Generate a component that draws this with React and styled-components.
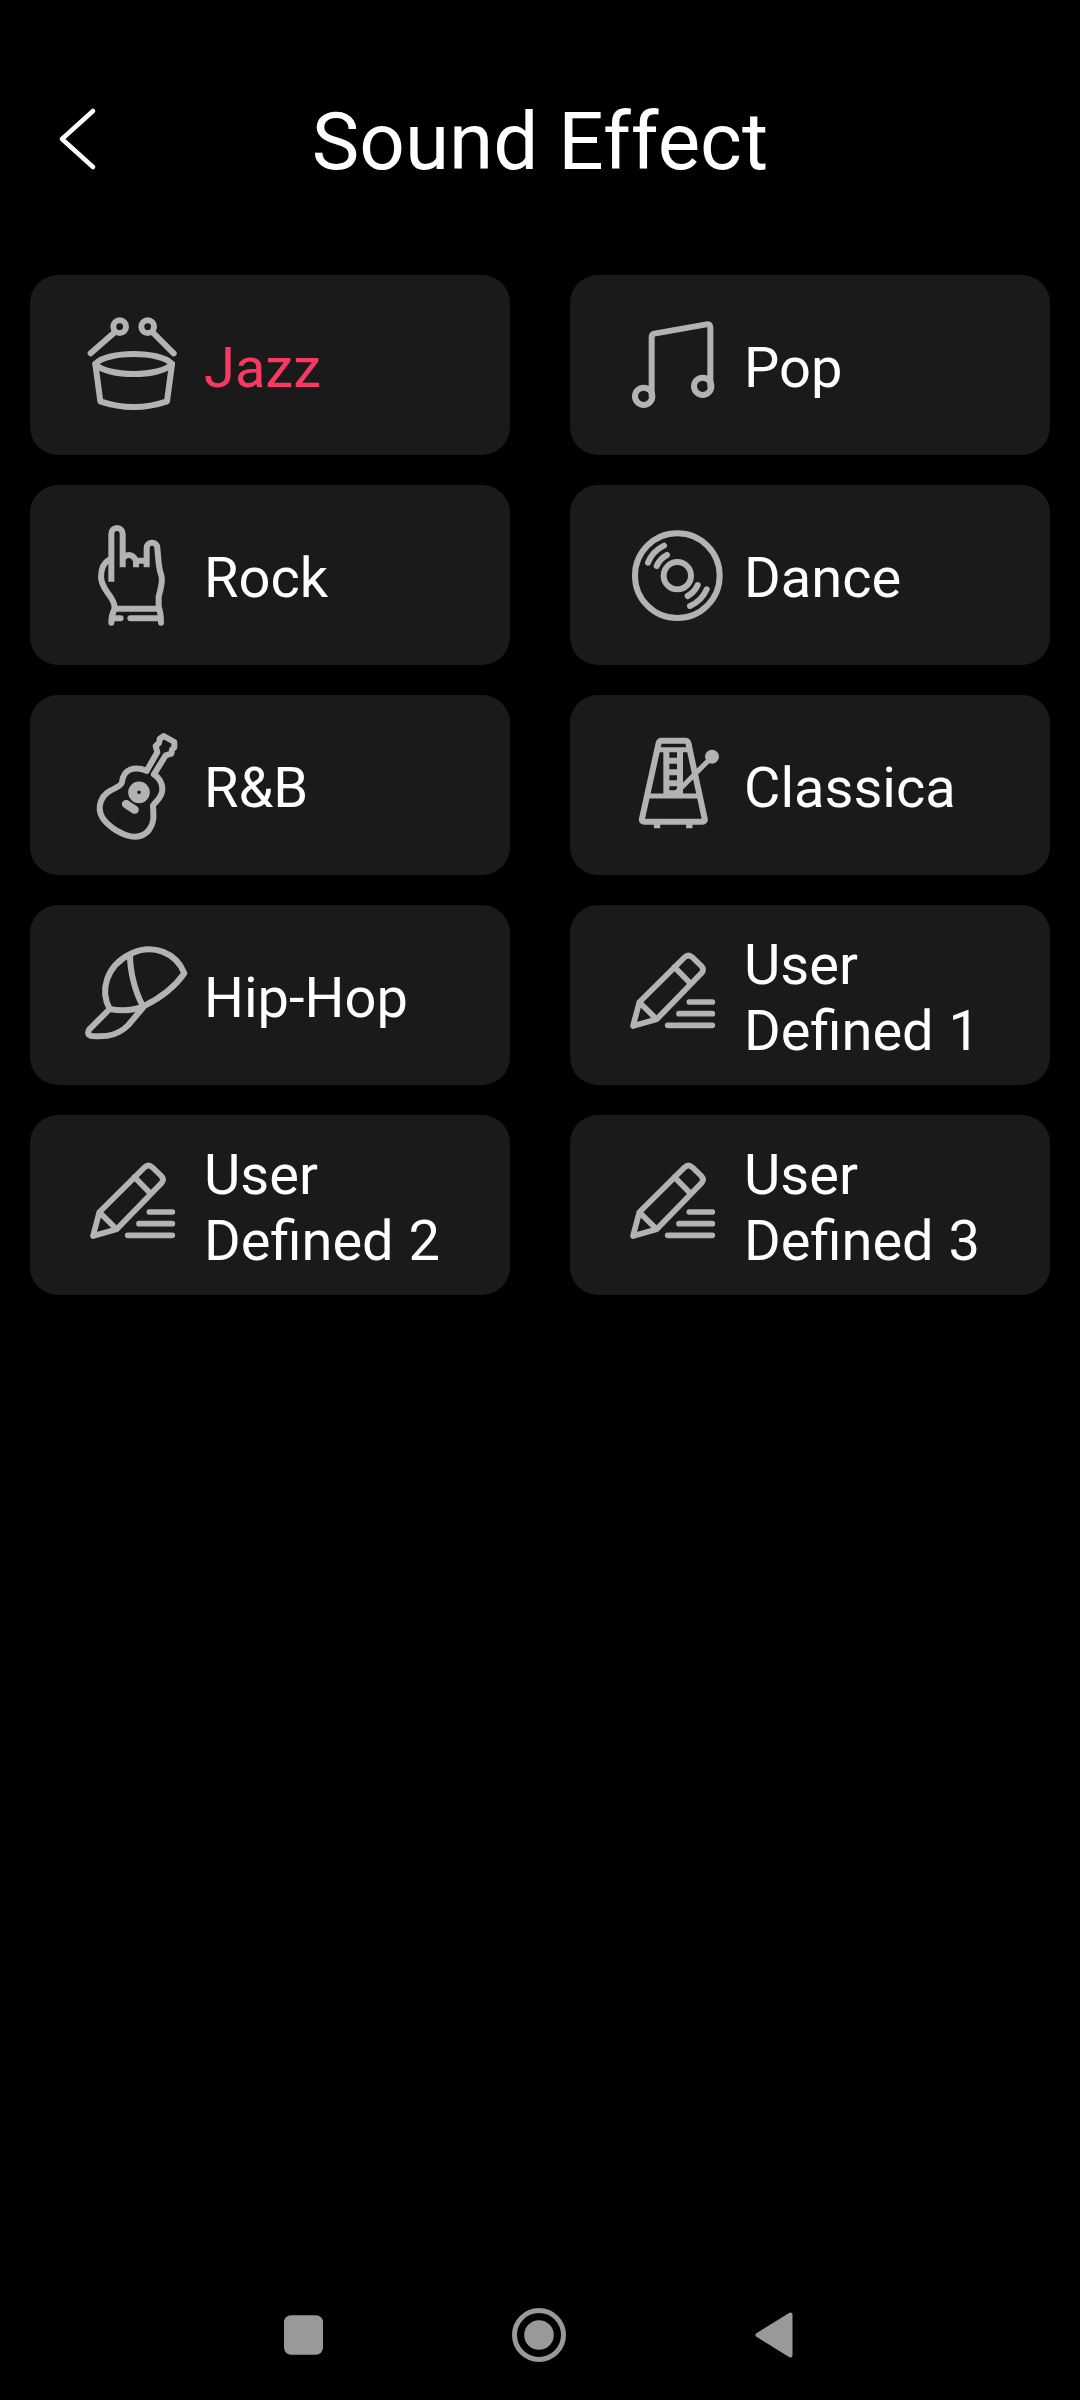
import { useState } from "react";
import styled, { createGlobalStyle } from "styled-components";

const GlobalStyle = createGlobalStyle`
  body {
    margin: 0;
    background: #000;
    font-family: Roboto, sans-serif;
    color: #fff;
  }
`;

const Screen = styled.div`
  display: flex;
  flex-direction: column;
  min-height: 100vh;
  background: #000;
`;

const Header = styled.header`
  display: grid;
  grid-template-columns: 1fr auto 1fr;
  align-items: center;
  padding: 95px 30px 86px;
`;

const Title = styled.h1`
  margin: 0;
  font-size: 80px;
  font-weight: 400;
  line-height: 94px;
`;

const IconButton = styled.button`
  display: flex;
  justify-content: center;
  align-items: center;
  width: ${({ $width }) => $width}px;
  padding: 0;
  background: none;
  border: none;
  cursor: pointer;
`;

const EffectGrid = styled.main`
  flex: 1;
  display: grid;
  grid-template-columns: 1fr 1fr;
  grid-auto-rows: 180px;
  gap: 30px 60px;
  padding: 0 30px;
`;

const EffectCard = styled.button`
  display: flex;
  align-items: center;
  gap: 4px;
  padding: 0 0 0 50px;
  border: none;
  border-radius: 28px;
  background: #1a1a1a;
  color: ${({ $active }) => ($active ? "#f93963" : "#fff")};
  font-family: inherit;
  font-size: 56px;
  line-height: 66px;
  text-align: left;
  cursor: pointer;
`;

const EffectIcon = styled.svg`
  flex: none;
  width: 120px;
  height: 120px;
  fill: none;
  stroke: #b3b3b3;
  stroke-width: 18;
  stroke-linecap: round;
  stroke-linejoin: round;
`;

const EffectName = styled.span`
  flex: 1;
  padding-top: 6px;
  word-spacing: 1px;
`;

const NavBar = styled.nav`
  display: flex;
  justify-content: center;
  align-items: center;
  height: 130px;
  padding-right: 2px;
`;

const DrumIcon = () => (
  <>
    <circle cx="299" cy="185" r="19" />
    <circle cx="383" cy="185" r="19" />
    <path d="M284 202L212 265M398 202L461 265" />
    <path d="M226 297C260 257 422 257 456 297C422 337 260 337 226 297Z" />
    <path d="M226 297L241 409Q341 443 441 409L456 297" />
  </>
);

const NoteIcon = () => (
  <>
    <circle cx="251" cy="394" r="26" />
    <circle cx="428" cy="364" r="26" />
    <path d="M275 394V216Q275 208 283 206L439 178Q451 176 451 187V364" />
  </>
);

const HornsIcon = () => (
  <>
    <path
      strokeLinecap="butt"
      d="M274 320V176A17 17 0 0 1 308 176V277M348 277V258M380 277V219A16 16 0 0 1 412 219L416 265Q418 285 425 305Q428 322 416 365V392"
    />
    <path d="M309 248Q318 240 326 240Q341 240 348 257H378" />
    <path d="M268 254Q243 268 243 306Q244 327 262 352Q284 380 284 398" />
    <path d="M284 401H416M284 401Q274 420 274 443M416 395Q423 415 423 443M280 430H302M331 430H420" />
  </>
);

const DiscIcon = () => (
  <>
    <circle cx="352" cy="302" r="127" />
    <circle cx="352" cy="302" r="41" />
    <path d="M264 263A97 97 0 0 1 312 212M290 273A69 69 0 0 1 321 240" />
    <path d="M440 343A97 97 0 0 1 390 393M413 330A69 69 0 0 1 383 363" />
  </>
);

const GuitarIcon = () => (
  <>
    <path d="M380 257C345 243 310 250 306 292C300 314 258 308 243 348C228 388 256 415 290 437C330 461 365 462 387 435C405 410 400 390 399 362C405 350 427 340 427 312C427 290 415 277 402 268" />
    <path d="M380 257L412 202L407 183L417 174L419 162L431 153L463 171V187L456 194L454 206L437 211L402 268" />
    <circle cx="357" cy="322" r="19" strokeWidth="27" />
    <path strokeWidth="25" d="M318 357L344 374" />
  </>
);

const MetronomeIcon = () => (
  <>
    <path d="M304 167H376Q383 167 385 174L434 401Q436 410 427 410H253Q244 410 246 401L296 174Q298 167 304 167Z" />
    <path strokeLinecap="butt" d="M319 194V333M360 194V333M326 227H354M326 262H354M326 295H354M326 325H354" />
    <path strokeWidth="15" strokeLinecap="butt" d="M294 194H388M260 333H422" />
    <path strokeWidth="15" d="M342 330L456 216" />
    <path strokeWidth="19" strokeLinecap="butt" d="M291 412V430M388 412V430" />
    <circle cx="456" cy="215" r="21" fill="#b3b3b3" stroke="none" />
  </>
);

const CapIcon = () => (
  <>
    <path d="M269 342C240 288 256 215 331 177C400 143 470 175 493 235C460 282 420 310 372 333C340 347 300 348 269 342Z" />
    <path d="M330 180C330 230 345 290 368 332" />
    <path d="M269 342L208 403Q198 420 216 423C270 428 300 415 325 390L368 339" />
  </>
);

const PencilIcon = () => (
  <>
    <path
      strokeWidth="17"
      d="M219 393L238 322L374 187Q385 176 397 187L424 213Q434 224 424 235L290 373L219 393ZM343 216L390 264M238 322L290 373"
    />
    <path strokeWidth="17" d="M388 321H457M357 356H457M323 391H457" />
  </>
);

const effects = [
  { name: "Jazz", Icon: DrumIcon },
  { name: "Pop", Icon: NoteIcon },
  { name: "Rock", Icon: HornsIcon },
  { name: "Dance", Icon: DiscIcon },
  { name: "R&B", Icon: GuitarIcon },
  { name: "Classica", Icon: MetronomeIcon },
  { name: "Hip-Hop", Icon: CapIcon },
  { name: "User Defined 1", Icon: PencilIcon },
  { name: "User Defined 2", Icon: PencilIcon },
  { name: "User Defined 3", Icon: PencilIcon },
];

const App = () => {
  const [selected, setSelected] = useState("Jazz");

  return (
    <>
      <GlobalStyle />
      <Screen>
        <Header>
          <IconButton $width={96}>
            <svg width="40" height="70" viewBox="0 0 40 70" fill="none">
              <path
                d="M35 4L4 32L35 60"
                stroke="#fff"
                strokeWidth="4.6"
                strokeLinecap="round"
                strokeLinejoin="round"
              />
            </svg>
          </IconButton>
          <Title>Sound Effect</Title>
        </Header>

        <EffectGrid>
          {effects.map(({ name, Icon }) => (
            <EffectCard
              key={name}
              $active={name === selected}
              onClick={() => setSelected(name)}
            >
              <EffectIcon viewBox="180 120 360 360">
                <Icon />
              </EffectIcon>
              <EffectName>{name}</EffectName>
            </EffectCard>
          ))}
        </EffectGrid>

        <NavBar>
          <IconButton $width={235}>
            <svg width="40" height="40" viewBox="0 0 40 40">
              <rect x="0" y="0.3" width="39" height="39.4" rx="7" fill="#999" />
            </svg>
          </IconButton>
          <IconButton $width={235}>
            <svg width="54" height="54" viewBox="0 0 54 54">
              <circle cx="27" cy="27" r="24.5" fill="none" stroke="#999" strokeWidth="5" />
              <circle cx="27" cy="27" r="14.8" fill="#999" />
            </svg>
          </IconButton>
          <IconButton $width={235}>
            <svg width="38" height="46" viewBox="0 0 38 46">
              <path
                d="M2.5 23L35.5 2.5V43.5Z"
                fill="#999"
                stroke="#999"
                strokeWidth="4"
                strokeLinejoin="round"
              />
            </svg>
          </IconButton>
        </NavBar>
      </Screen>
    </>
  );
};

export default App;
